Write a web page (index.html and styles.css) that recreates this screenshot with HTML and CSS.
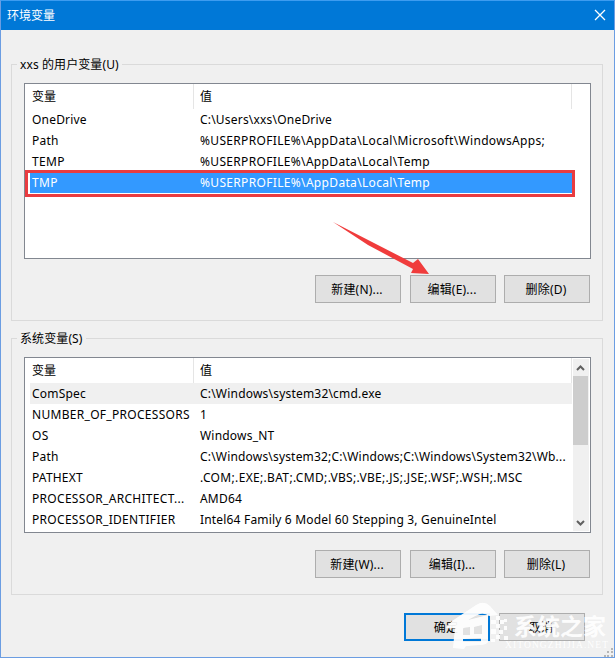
FILE: index.html
```html
<!DOCTYPE html>
<html lang="zh-CN">
<head>
<meta charset="utf-8">
<title>环境变量</title>
<link rel="stylesheet" href="styles.css">
</head>
<body>
<div class="window">
  <header class="titlebar">
    <span>环境变量</span>
    <svg class="close" width="12" height="12" viewBox="0 0 12 12"><path d="M1 1L11 11M11 1L1 11"/></svg>
  </header>
  <section class="group user">
    <h2 class="legend">xxs 的用户变量(U)</h2>
    <div class="list">
      <div class="rows">
        <div class="head"><span class="name">变量</span><span class="value">值</span></div>
        <div class="row"><span class="name">OneDrive</span><span class="value">C:\Users\xxs\OneDrive</span></div>
        <div class="row"><span class="name">Path</span><span class="value wide">%USERPROFILE%\AppData\Local\Microsoft\WindowsApps;</span></div>
        <div class="row"><span class="name caps">TEMP</span><span class="value wide">%USERPROFILE%\AppData\Local\Temp</span></div>
        <div class="row selected"><span class="name caps">TMP</span><span class="value wide">%USERPROFILE%\AppData\Local\Temp</span><i class="marker"></i></div>
      </div>
    </div>
    <div class="buttons">
      <button>新建(N)...</button><button>编辑(E)...</button><button>删除(D)</button>
    </div>
    <svg class="arrow" width="98" height="56" viewBox="0 0 98 56"><path d="M0 0L80 41L85 37L96 52L78 51L80 47L35 23Z"/></svg>
  </section>
  <section class="group system">
    <h2 class="legend">系统变量(S)</h2>
    <div class="list">
      <div class="rows">
        <div class="head"><span class="name">变量</span><span class="value">值</span></div>
        <div class="row current"><span class="name">ComSpec</span><span class="value">C:\Windows\system32\cmd.exe</span></div>
        <div class="row"><span class="name caps">NUMBER_OF_PROCESSORS</span><span class="value">1</span></div>
        <div class="row"><span class="name caps">OS</span><span class="value">Windows_NT</span></div>
        <div class="row"><span class="name">Path</span><span class="value path">C:\Windows\system32;C:\Windows;C:\Windows\System32\Wb...</span></div>
        <div class="row"><span class="name">PATHEXT</span><span class="value wide">.COM;.EXE;.BAT;.CMD;.VBS;.VBE;.JS;.JSE;.WSF;.WSH;.MSC</span></div>
        <div class="row"><span class="name caps">PROCESSOR_ARCHITECT...</span><span class="value">AMD64</span></div>
        <div class="row"><span class="name caps">PROCESSOR_IDENTIFIER</span><span class="value path">Intel64 Family 6 Model 60 Stepping 3, GenuineIntel</span></div>
      </div>
      <div class="scrollbar">
        <svg width="15" height="17" viewBox="0 0 15 17"><path d="M4 11L7.5 7.5L11 11"/></svg>
        <div class="thumb"></div>
        <svg class="down" width="15" height="17" viewBox="0 0 15 17"><path d="M4 7L7.5 10.5L11 7"/></svg>
      </div>
    </div>
    <div class="buttons">
      <button>新建(W)...</button><button>编辑(I)...</button><button>删除(L)</button>
    </div>
  </section>
  <footer class="footer">
    <button class="default">确定</button><button>取消</button>
  </footer>
  <svg class="watermark" width="172" height="56" viewBox="440 600 172 56">
    <path d="M446 628L452 621L476 605Q484 600 490 606L498 615L489 616Q485 613 480 614Q469 618 465 624L463 629Z"/>
    <path fill-rule="evenodd" d="M456 623L488 615V642Q486 645 480 645L466 646L464 649L453 648Q454 635 456 623ZM463 628V635H470V627ZM474 627V634H482V625ZM463 639V642H481V638Z"/>
    <path d="M491 620h5v4h-5zM496 616h4v4h-4zM500 620h4v4h-4zM496 624h4v4h-4zM504 619h3v3h-3zM491 629h5v5h-5zM499 630h4v4h-4zM504 626h3v4h-3zM496 635h4v4h-4zM504 636h4v4h-4zM491 639h4v3h-4z"/>
    <text class="brand" x="514" y="635" textLength="92">系统之家</text>
    <text class="site" x="505" y="648" textLength="103">XITONGZHIJIA.NET</text>
  </svg>
  <svg class="grip" width="10" height="10" viewBox="0 0 10 10"><path d="M7 0h2v2h-2zM3 3h2v2h-2zM7 3h2v2h-2zM0 7h2v2h-2zM3 7h2v2h-2zM7 7h2v2h-2z"/></svg>
</div>
</body>
</html>
```
FILE: styles.css
```css
* { box-sizing: border-box; }
body {
  margin: 0;
  font-family: "Noto Sans", "Noto Sans CJK SC", sans-serif;
  font-size: 12px;
  color: #000;
}
.window {
  position: relative;
  width: 615px;
  height: 658px;
  border: 1px solid #6b9de2;
  border-top-color: #3d9cf0;
  background: #f0f0f0;
  overflow: hidden;
}
.titlebar {
  display: flex;
  align-items: center;
  justify-content: space-between;
  height: 29px;
  padding: 0 8px 2px 6px;
  background: #0078d7;
  color: #fff;
}
.close { fill: none; stroke: #fff; stroke-width: 1.3; }
.group {
  position: relative;
  width: 592px;
  height: 257px;
  margin: 34px 0 0 10px;
  border: 1px solid #dadada;
}
.system { margin-top: 17px; }
.legend {
  width: max-content;
  height: 19px;
  margin: -10px 0 9px 5px;
  padding: 0 3px;
  background: #f0f0f0;
  font-size: 12px;
  font-weight: normal;
  line-height: 19px;
  letter-spacing: 0.1px;
}
.list {
  display: flex;
  width: 567px;
  height: 176px;
  margin-left: 12px;
  border: 1px solid #828790;
  background: #fff;
}
.rows { width: 547px; padding-left: 5px; }
.head, .row {
  display: grid;
  grid-template-columns: 164px 378px;
  height: 21px;
  line-height: 21px;
  white-space: nowrap;
}
.head { height: 25px; line-height: 25px; }
.head span { border-right: 1px solid #e5e5e5; }
.name { padding-left: 2px; }
.value { padding-left: 6px; }
.row { position: relative; letter-spacing: 0.2px; }
.caps { letter-spacing: 0.3px; }
.wide { letter-spacing: 0.33px; }
.path { letter-spacing: 0.18px; }
.selected { background: #3399ff; color: #fff; }
.current { background: #f0f0f0; }
.marker {
  position: absolute;
  inset: -2px -3px -4px -5px;
  border: 3px solid #e93c40;
}
.scrollbar {
  display: flex;
  flex-direction: column;
  width: 16px;
  margin: 1px 0 1px 1px;
  background: #f0f0f0;
}
.scrollbar svg { fill: none; stroke: #606060; stroke-width: 2; }
.thumb { width: 15px; height: 69px; background: #cdcdcd; }
.down { margin-top: auto; }
.buttons {
  display: grid;
  grid-template-columns: 86px 86px 86px;
  column-gap: 9px;
  margin: 16px 0 0 303px;
}
.system .buttons { margin-top: 17px; }
.buttons button:last-child { margin-left: -1px; margin-right: 1px; }
button {
  height: 28px;
  padding: 0 2px 0 0;
  border: 1px solid #adadad;
  background: #e1e1e1;
  color: #000;
  font: inherit;
  letter-spacing: 0.2px;
}
.footer {
  display: grid;
  grid-template-columns: 86px 86px;
  column-gap: 9px;
  margin: 18px 0 0 403px;
}
.default { border: 2px solid #0078d7; }
.arrow { position: absolute; left: 321px; top: 157px; fill: #f03c3c; }
.watermark { position: absolute; left: 439px; top: 599px; fill: #fff; opacity: 0.93; }
.brand { font: bold 23px "Noto Sans CJK SC", sans-serif; }
.site { font: 9.5px "Liberation Serif", serif; }
.grip { position: absolute; left: 603px; top: 647px; fill: #b5b5b5; }
```
